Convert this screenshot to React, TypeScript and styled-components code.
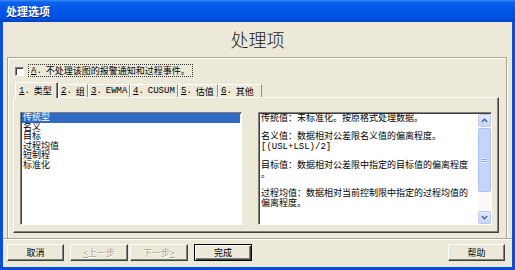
import React from "react";
import styled, { createGlobalStyle } from "styled-components";

const Global = createGlobalStyle`
  html, body { margin: 0; padding: 0; background: #fff; }
  body {
    width: 515px; height: 270px; overflow: hidden;
    font-family: "Liberation Mono", "Noto Sans CJK SC", monospace;
    font-size: 9px; color: #000;
  }
  * { box-sizing: border-box; }
`;

const Frame = styled.div`
  width: 515px;
  height: 270px;
  display: flex;
  flex-direction: column;
  background: #0A4FD6;
  padding: 0 3px 3px 3px;
`;

const TitleBar = styled.div`
  height: 22px;
  margin: 0 -3px;
  padding-left: 6px;
  display: flex;
  align-items: center;
  background: linear-gradient(to bottom, #3C8CF8 0%, #0D62EC 10%, #0056E6 45%, #0052E0 80%, #0043C8 100%);
  color: #fff;
  font-family: "Noto Sans CJK SC", sans-serif;
  font-weight: 700;
  font-size: 11px;
  text-shadow: 1px 1px 0 #0B2A8A;
`;

const Body = styled.div`
  flex: 1;
  background: #ECE9D8;
  display: flex;
  flex-direction: column;
`;

const Heading = styled.div`
  height: 35px;
  display: flex;
  align-items: center;
  justify-content: center;
  font-family: "Noto Sans CJK SC", sans-serif;
  font-size: 18px;
  font-weight: 300;
  color: #1a1a1a;
  padding-bottom: 2px;
`;

const GroupBox = styled.div`
  margin: 0 5px 0 4px;
  height: 181px;
  border: 1px solid #ACA899;
  border-bottom: none;
  box-shadow: inset 1px 1px 0 #fff, 1px 0 0 #fff;
  padding: 6px 7px 5px 5px;
  display: flex;
  flex-direction: column;
`;

const Separator = styled.div`
  height: 2px;
  border-top: 1px solid #ACA899;
  border-bottom: 1px solid #fff;
`;

const CheckRow = styled.div`
  height: 13px;
  margin-left: 2px;
  display: flex;
  align-items: center;
  gap: 4px;
`;

const CheckBox = styled.div`
  width: 9px;
  height: 9px;
  margin-top: 2px;
  background: #fff;
  border: 1px solid;
  border-color: #808080 #fff #fff #808080;
  box-shadow: inset 1px 1px 0 #404040;
`;

const FocusLabel = styled.div`
  height: 13px;
  width: 165px;
  padding-left: 2px;
  display: flex;
  align-items: center;
  border: 1px dotted #333;
  white-space: nowrap;
`;

const U = styled.span`
  text-decoration: underline;
  text-underline-offset: 1px;
`;

const TabStrip = styled.div`
  margin-top: 5px;
  height: 15px;
  margin-left: 2px;
  display: flex;
  align-items: flex-end;
`;

const Tab = styled.div<{ $w: number; $active?: boolean }>`
  width: ${(p) => p.$w}px;
  height: ${(p) => (p.$active ? 16 : 13)}px;
  margin-bottom: ${(p) => (p.$active ? -1 : 0)}px;
  padding-left: ${(p) => (p.$active ? 3 : 2)}px;
  display: flex;
  align-items: center;
  white-space: nowrap;
  background: #ECE9D8;
  border-top: 1px solid #fff;
  border-left: 1px solid #fff;
  border-right: 1px solid ${(p) => (p.$active ? "#404040" : "#8E8E8E")};
  box-shadow: ${(p) => (p.$active ? "inset -1px 0 0 #808080" : "none")};
  position: relative;
  z-index: ${(p) => (p.$active ? 2 : 1)};
`;

const Gap = styled.span`
  display: inline-block;
  width: 4px;
`;

const Panel = styled.div`
  height: 136px;
  border: 1px solid;
  border-color: #fff #404040 #404040 #fff;
  box-shadow: inset -1px -1px 0 #808080;
  padding: 14px 6px 7px 6px;
  display: flex;
  gap: 16px;
  position: relative;
  z-index: 1;
`;

const ListBox = styled.div`
  width: 222px;
  height: 113px;
  background: #fff;
  border: 1px solid;
  border-color: #808080 #fff #fff #808080;
  box-shadow: inset 1px 1px 0 #404040;
  padding: 0 1px 0 1px;
  font-family: "Liberation Sans", "Noto Sans CJK SC", sans-serif;
`;

const ListItem = styled.div<{ $selected?: boolean }>`
  height: 9.5px;
  line-height: 9.5px;
  padding-left: 1px;
  white-space: nowrap;
  background: ${(p) => (p.$selected ? "#316AC5" : "transparent")};
  color: ${(p) => (p.$selected ? "#fff" : "#000")};
`;

const TextBox = styled.div`
  width: 234px;
  height: 113px;
  background: #fff;
  border: 1px solid;
  border-color: #808080 #fff #fff #808080;
  box-shadow: inset 1px 1px 0 #404040;
  display: flex;
`;

const TextArea = styled.div`
  flex: 1;
  padding: 2px 0 0 2px;
  overflow: hidden;
`;

const Para = styled.div`
  margin-bottom: 8.8px;
`;

const Line = styled.div`
  height: 9.7px;
  line-height: 9.7px;
  white-space: nowrap;
`;

const ScrollBar = styled.div`
  width: 13px;
  margin-top: 1px;
  display: flex;
  flex-direction: column;
  background: #FAF9F5;
`;

const Arrow = styled.div`
  height: 13px;
  display: flex;
  align-items: center;
  justify-content: center;
  background: linear-gradient(to bottom, #E3EBFD, #C5D5FA);
  border: 1px solid #BACBF3;
  border-radius: 2px;
`;

const Thumb = styled.div`
  height: 64px;
  margin-top: 1px;
  display: flex;
  align-items: center;
  justify-content: center;
  background: #C4D4FB;
  border: 1px solid #AFC3F2;
  border-radius: 2px;
`;

const Track = styled.div`
  flex: 1;
`;

const Grip = styled.div`
  width: 5px;
  height: 5px;
  background: repeating-linear-gradient(to bottom, #EEF3FE 0 1px, #8CA5E0 1px 2px);
`;

const ButtonRow = styled.div`
  margin-top: 4px;
  padding: 0 7px 0 4px;
  height: 17px;
  display: flex;
`;

const Button = styled.button<{ $w: number; $gap?: number; $default?: boolean; $push?: boolean }>`
  width: ${(p) => p.$w}px;
  height: 17px;
  margin-left: ${(p) => (p.$push ? "auto" : `${p.$gap ?? 0}px`)};
  padding: 0;
  font-family: "Noto Sans CJK SC", sans-serif;
  font-size: 9px;
  background: #ECE9D8;
  color: ${(p) => (p.disabled ? "#ACA899" : "#000")};
  text-shadow: ${(p) => (p.disabled ? "1px 1px 0 #fff" : "none")};
  border: 1px solid;
  border-color: ${(p) => (p.$default ? "#000" : "#fff #404040 #404040 #fff")};
  box-shadow: ${(p) =>
    p.$default
      ? "inset 1px 1px 0 #fff, inset -1px -1px 0 #404040, inset -2px -2px 0 #808080"
      : "inset -1px -1px 0 #808080"};
`;

const ChevronUp = () => (
  <svg width="7" height="5" viewBox="0 0 7 5">
    <path d="M0.8 4 L3.5 1.3 L6.2 4" fill="none" stroke="#4D6185" strokeWidth="1.4" />
  </svg>
);
const ChevronDown = () => (
  <svg width="7" height="5" viewBox="0 0 7 5">
    <path d="M0.8 1 L3.5 3.7 L6.2 1" fill="none" stroke="#4D6185" strokeWidth="1.4" />
  </svg>
);

const tabs = [
  { k: "1", t: "类型", w: 43, active: true },
  { k: "2", t: "组", w: 30 },
  { k: "3", t: "EWMA", w: 42 },
  { k: "4", t: "CUSUM", w: 48 },
  { k: "5", t: "估值", w: 40 },
  { k: "6", t: "其他", w: 44 },
];

const items = ["传统型", "名义", "目标", "过程均值", "短制程", "标准化"];

export default function App() {
  return (
    <>
      <Global />
      <Frame>
        <TitleBar>处理选项</TitleBar>
        <Body>
          <Heading>处理项</Heading>
          <GroupBox>
            <CheckRow>
              <CheckBox />
              <FocusLabel>
                <U>A</U>.<Gap />不处理该图的报警通知和过程事件。
              </FocusLabel>
            </CheckRow>
            <TabStrip>
              {tabs.map((t) => (
                <Tab key={t.k} $w={t.w} $active={t.active}>
                  <U>{t.k}</U>.<Gap />
                  {t.t}
                </Tab>
              ))}
            </TabStrip>
            <Panel>
              <ListBox>
                {items.map((it, i) => (
                  <ListItem key={it} $selected={i === 0}>
                    {it}
                  </ListItem>
                ))}
              </ListBox>
              <TextBox>
                <TextArea>
                  <Para>
                    <Line>传统值：未标准化。按原格式处理数据。</Line>
                  </Para>
                  <Para>
                    <Line>名义值：数据相对公差限名义值的偏离程度。</Line>
                    <Line>[(USL+LSL)/2]</Line>
                  </Para>
                  <Para>
                    <Line>目标值：数据相对公差限中指定的目标值的偏离程度</Line>
                    <Line>。</Line>
                  </Para>
                  <Para>
                    <Line>过程均值：数据相对当前控制限中指定的过程均值的</Line>
                    <Line>偏离程度。</Line>
                  </Para>
                </TextArea>
                <ScrollBar>
                  <Arrow>
                    <ChevronUp />
                  </Arrow>
                  <Thumb>
                    <Grip />
                  </Thumb>
                  <Track />
                  <Arrow>
                    <ChevronDown />
                  </Arrow>
                </ScrollBar>
              </TextBox>
            </Panel>
          </GroupBox>
          <Separator />
          <ButtonRow>
            <Button $w={57}>取消</Button>
            <Button $w={58} $gap={6} disabled>
              <U>&lt;</U>上一步
            </Button>
            <Button $w={58} $gap={2} disabled>
              下一步<U>&gt;</U>
            </Button>
            <Button $w={58} $gap={6} $default>
              完成
            </Button>
            <Button $w={57} $push>
              帮助
            </Button>
          </ButtonRow>
        </Body>
      </Frame>
    </>
  );
}
